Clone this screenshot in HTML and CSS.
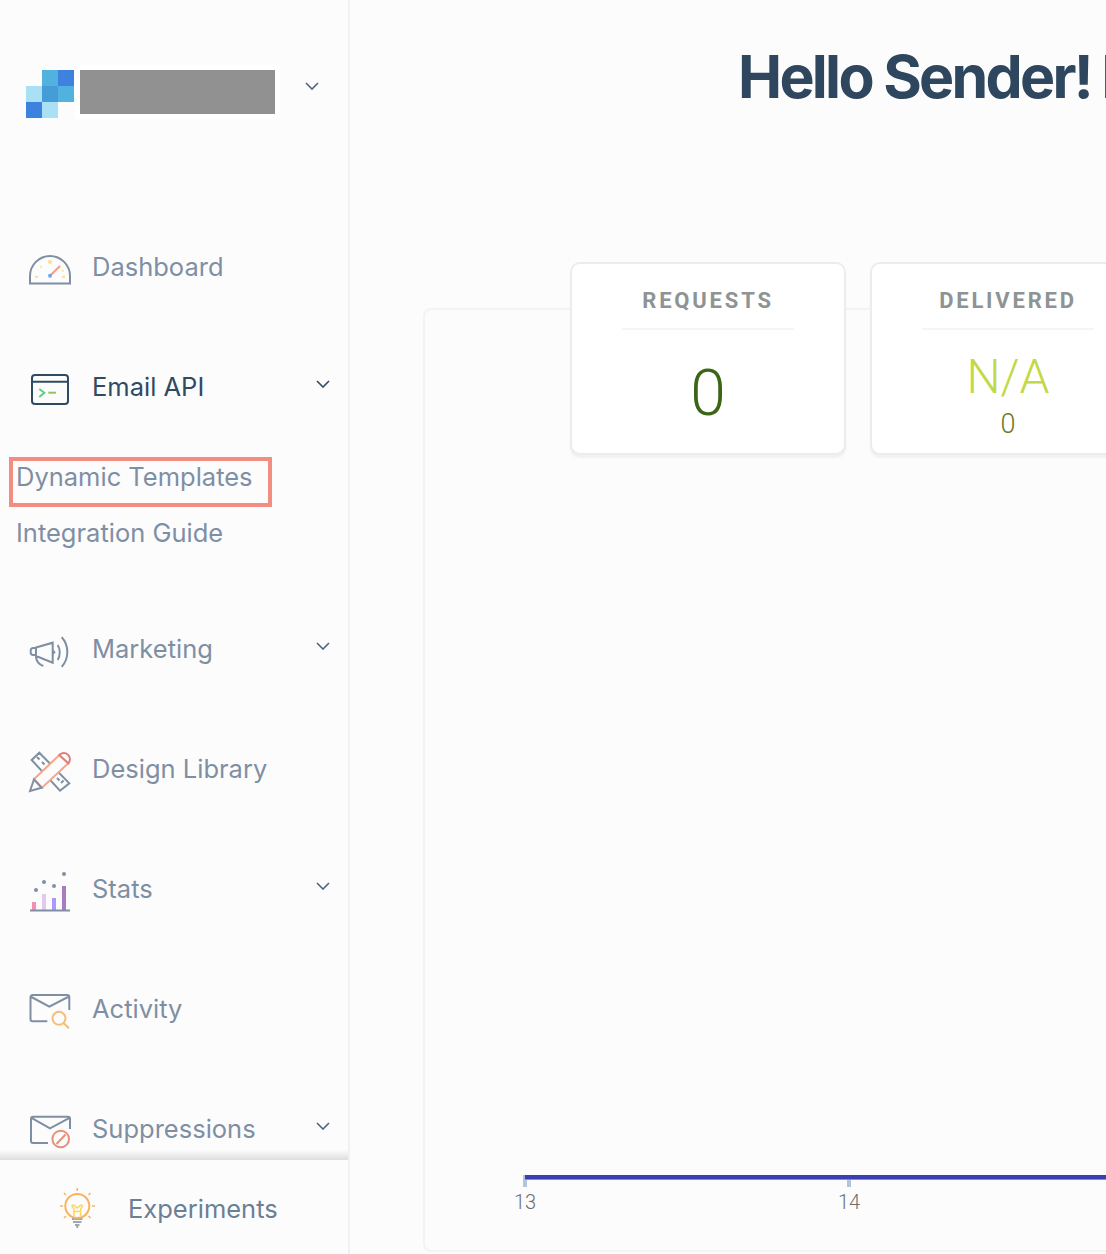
FILE: index.html
```html
<!DOCTYPE html>
<html lang="en">
<head>
<meta charset="utf-8">
<title>Dashboard</title>
<link rel="stylesheet" href="styles.css">
</head>
<body>
<div class="app">
  <aside class="sidebar">
    <div class="nav-scroll">
      <header class="account">
        <div class="logo">
          <span></span><span class="sky"></span><span class="blue"></span>
          <span class="pale"></span><span class="mid"></span><span class="sky"></span>
          <span class="blue"></span><span class="pale"></span><span></span>
        </div>
        <div class="redacted"><div class="redacted-fill"></div></div>
        <svg class="chevron account-chevron" viewBox="0 0 14 8"><path d="M1 1l6 6 6-6"/></svg>
      </header>
      <nav>
        <a class="nav-row">
          <svg class="nav-icon" viewBox="0 0 44 44">
            <path class="slate" d="M2 38.500V31a20 20 0 0 1 40 0v7.500z"/>
            <circle class="sun" cx="22" cy="17" r="2"/><circle class="sun" cx="13" cy="21.700" r="1"/><circle class="sun" cx="34.700" cy="25.700" r="1"/>
            <path class="sun-line" d="M7 31.700h3M34 31.700h3"/>
            <path class="needle" d="M22 30.700L32 21"/>
            <circle class="needle-dot" cx="22" cy="30.700" r="2"/>
          </svg>
          <span>Dashboard</span>
        </a>
        <a class="nav-row active">
          <svg class="nav-icon" viewBox="0 0 44 44">
            <rect class="navy" x="4" y="10" width="36" height="29" rx="3"/>
            <path class="navy" d="M4 16.700h36"/>
            <path class="prompt" d="M11.300 24l5 3.700-5 4.300"/>
            <path class="dash" d="M20.300 27.700H28"/>
          </svg>
          <span>Email API</span>
          <svg class="chevron nav-chevron" viewBox="0 0 14 8"><path d="M1 1l6 6 6-6"/></svg>
        </a>
        <div class="sub-list">
          <a class="sub-item highlighted">Dynamic Templates</a>
          <a class="sub-item">Integration Guide</a>
        </div>
        <a class="nav-row">
          <svg class="nav-icon" viewBox="0 0 44 44">
            <path class="slate" d="M8 20.500l16.700-4.800v20L8 29zM8 21H5a2.300 2.300 0 0 0-2.300 2.300v2.400A2.300 2.300 0 0 0 5 28h3M8 29.700c0 4 3 8 7.300 9.300M29.700 18c2.700 4 2.700 11 0 15M33.700 10.300c7.500 8 7.500 21.400 0 29.400"/>
            <path class="slate-fill" d="M24.700 22l3 3.300-3 3.300z"/>
          </svg>
          <span>Marketing</span>
          <svg class="chevron nav-chevron" viewBox="0 0 14 8"><path d="M1 1l6 6 6-6"/></svg>
        </a>
        <a class="nav-row">
          <svg class="nav-icon" viewBox="0 0 44 44">
            <path class="slate" d="M3.700 13l7.600-7.300L41.300 36.300 32 43.700zM9 10l2.500 2.500M14 15l2.500 2.500M29 31l2.500 2.500M33 36l2.500-2.500"/>
            <path class="pencil" d="M6 32.300L31.300 8l9 8.300-26.300 24.400z"/>
            <path class="pencil-cap" d="M31.300 8a5 5 0 1 1 9 8.300z"/>
            <path class="slate" d="M2 44l4-11.700 7.700 8.400z"/>
          </svg>
          <span>Design Library</span>
        </a>
        <a class="nav-row">
          <svg class="nav-icon" viewBox="0 0 44 44">
            <path class="bar-pink" d="M4 35h4v8H4z"/><path class="bar-lilac" d="M14 27h4v16h-4z"/>
            <path class="bar-violet" d="M24 31h4v12h-4z"/><path class="bar-purple" d="M34 19h4v24h-4z"/>
            <path class="slate" d="M2 43.500h40"/>
            <circle class="slate-fill" cx="8" cy="23" r="2"/><circle class="slate-fill" cx="16" cy="15" r="2"/>
            <circle class="slate-fill" cx="26" cy="19" r="2"/><circle class="slate-fill" cx="36" cy="7" r="2"/>
          </svg>
          <span>Stats</span>
          <svg class="chevron nav-chevron" viewBox="0 0 14 8"><path d="M1 1l6 6 6-6"/></svg>
        </a>
        <a class="nav-row">
          <svg class="nav-icon" viewBox="0 0 44 44">
            <path class="slate" d="M19.300 34.300H4.500a2 2 0 0 1-2-2V10a2 2 0 0 1 2-2h34.800a2 2 0 0 1 2 2v13M2.500 9.500l18.800 10.200L41 9.500"/>
            <circle class="lens" cx="31" cy="31.300" r="6.500"/>
            <path class="lens" d="M36 36.500l5 4.800"/>
          </svg>
          <span>Activity</span>
        </a>
        <a class="nav-row">
          <svg class="nav-icon" viewBox="0 0 44 44">
            <path class="slate" d="M20 36H5a2 2 0 0 1-2-2V11.700a2 2 0 0 1 2-2h35a2 2 0 0 1 2 2V22M3 10.700l19 10.600 20-10.600"/>
            <circle class="ban" cx="32.700" cy="32" r="8.300"/>
            <path class="ban" d="M28.500 37l9-9.500"/>
          </svg>
          <span>Suppressions</span>
          <svg class="chevron nav-chevron" viewBox="0 0 14 8"><path d="M1 1l6 6 6-6"/></svg>
        </a>
      </nav>
    </div>
    <footer class="experiments">
      <svg class="bulb" viewBox="0 0 44 44">
        <path class="bulb-base" d="M17 34h10.500M18 37h8.500M20 40h4.500M22.300 40v3"/>
        <circle class="bulb-glass" cx="22.300" cy="21" r="12"/>
        <path class="bulb-wire" d="M19 31v-7l-2-3a1.600 1.600 0 0 1 3 0l2.300 2 2.300-2a1.600 1.600 0 0 1 3 0l-2 3v7M19 26.500h6.500"/>
        <path class="bulb-ray" d="M22.300 3v3M5 21h3M37 21h3M9 8l2 2M35.500 8l-2 2M9 33l2-2M35.500 33l-2-2"/>
      </svg>
      <span>Experiments</span>
    </footer>
  </aside>
  <main class="main">
    <h1 class="greeting">Hello Sender! <span class="greeting-rest">Here</span></h1>
    <section class="stat-row">
      <article class="stat-card">
        <h2 class="stat-label">REQUESTS</h2>
        <div class="stat-value requests">0</div>
      </article>
      <article class="stat-card">
        <h2 class="stat-label">DELIVERED</h2>
        <div class="stat-value delivered">N/A</div>
        <div class="stat-count">0</div>
      </article>
    </section>
    <section class="chart">
      <div class="axis-line"></div>
      <div class="axis-ticks">
        <div class="tick"><i class="tick-mark first"></i><span>13</span></div>
        <div class="tick"><i class="tick-mark"></i><span>14</span></div>
        <div class="tick"><i class="tick-mark"></i><span>15</span></div>
      </div>
    </section>
  </main>
</div>
</body>
</html>
```
FILE: styles.css
```css
* { box-sizing: border-box; }
html, body { margin: 0; height: 100%; }
body { background: #fcfcfc; overflow: hidden; font-family: Inter, "Liberation Sans", sans-serif; }
.app { display: flex; width: 1106px; height: 1254px; overflow: hidden; }

/* sidebar */
.sidebar { flex: none; width: 350px; height: 1254px; display: flex; flex-direction: column; border-right: 2px solid #f1f1f5; background: #fcfcfd; }
.nav-scroll { flex: 1; min-height: 0; overflow: hidden; }
.account { display: flex; align-items: flex-start; height: 207px; padding: 65px 0 0 26px; }
.logo { display: grid; grid-template-columns: repeat(3, 16px); grid-auto-rows: 16px; margin-top: 5px; }
.logo .sky { background: #51b2e0; }
.logo .blue { background: #3d82de; }
.logo .pale { background: #a9e0f5; }
.logo .mid { background: #459cd6; }
.redacted { width: 205px; height: 54px; margin-left: 1px; padding: 5px; background: #fff; }
.redacted-fill { height: 44px; background: #919191; }
.chevron { width: 14px; height: 8px; fill: none; stroke: #4e647c; stroke-width: 1.6; }
.account-chevron { margin: 17px 0 0 25px; }

.nav-row { position: relative; display: flex; align-items: center; height: 120px; padding-left: 28px; color: #7f8fa3; font-size: 25.5px; }
.nav-row span { margin: 0 0 2px 20px; }
.nav-row.active { color: #2f4a63; }
.nav-icon { flex: none; width: 44px; height: 44px; overflow: visible; }
.nav-chevron { position: absolute; left: 316px; top: 53px; }
.active .nav-chevron { stroke: #2f4a63; }

.sub-list { height: 142px; padding-top: 10px; }
.sub-item { display: block; height: 56px; padding-left: 16px; color: #7f8fa3; font-size: 25.5px; line-height: 40px; }
.sub-item.highlighted { width: 263px; height: 50px; margin-left: 9px; margin-bottom: 6px; padding-left: 3px; border: 4px solid #f28d82; line-height: 32px; }

.experiments { position: relative; flex: none; height: 94px; display: flex; align-items: center; padding-left: 55px; color: #6b7f95; font-size: 25.5px; background: #fcfcfd; }
.experiments::before { content: ""; position: absolute; left: 0; right: 0; top: -10px; height: 10px; background: linear-gradient(rgba(0, 0, 0, 0), rgba(0, 0, 0, .12)); }
.experiments span { margin: 2px 0 0 29px; }
.bulb { width: 44px; height: 44px; flex: none; }

/* icon strokes */
svg path, svg circle, svg rect { fill: none; }
.slate { stroke: #7f8fa3; stroke-width: 2; }
.slate-fill { fill: #7f8fa3 !important; }
.navy { stroke: #2f4a63; stroke-width: 2; }
.sun { fill: #fbe08a !important; }
.sun-line { stroke: #fbe08a; stroke-width: 2; }
.needle { stroke: #f59c84; stroke-width: 2; }
.needle-dot { fill: #6fa5ee !important; }
.prompt { stroke: #5fcf80; stroke-width: 2; }
.dash { stroke: #8fc65a; stroke-width: 2; }
.pencil { fill: #fcfcfd !important; stroke: #f4a58c; stroke-width: 2; }
.pencil-cap { fill: #fcfcfd !important; stroke: #d9827a; stroke-width: 2; }
.bar-pink { fill: #f48fb1 !important; }
.bar-lilac { fill: #e6c8ef !important; }
.bar-violet { fill: #a899fa !important; }
.bar-purple { fill: #a77cc0 !important; }
.lens { stroke: #f6bc78; stroke-width: 2; }
.ban { stroke: #e8907a; stroke-width: 2; }
.bulb-base { stroke: #9aa8b8; stroke-width: 2; }
.bulb-glass { stroke: #f9b25e; stroke-width: 2; }
.bulb-wire { stroke: #fbd75b; stroke-width: 1.500; }
.bulb-ray { stroke: #f9b25e; stroke-width: 1.500; }

/* main */
.main { flex: none; width: 756px; padding-left: 73px; overflow: hidden; }
.greeting { width: 900px; height: 262px; margin: 0; padding: 42px 0 0 315px; color: #2e465e; font-size: 59px; line-height: 70px; font-weight: 700; letter-spacing: -2.7px; white-space: nowrap; }
.greeting-rest { margin-left: -1px; }
.stat-row { position: relative; z-index: 1; display: flex; gap: 24px; height: 192px; margin: 0 0 -146px 147px; width: 800px; }
.stat-card { flex: none; width: 276px; height: 193px; padding: 0 50px; text-align: center; background: #fff; border: 2px solid #ececec; border-radius: 10px; box-shadow: 0 3px 2px #f1f1f1; font-family: Roboto, sans-serif; }
.stat-label { height: 66px; margin: 0; border-bottom: 2px solid #f5f5f5; color: #8e9393; font-size: 22px; line-height: 74px; font-weight: 700; letter-spacing: 2.8px; }
.stat-value { font-weight: 300; }
.requests { color: #3c6517; font-size: 64px; line-height: 128px; }
.delivered { color: #c3d845; font-size: 48px; line-height: 94px; }
.stat-count { margin-top: -15px; color: #6f7a1f; font-size: 27px; line-height: 30px; font-weight: 300; }

.chart { display: flex; flex-direction: column; justify-content: flex-end; width: 1000px; height: 944px; padding-bottom: 34px; border: 2px solid #f3f3f3; border-radius: 8px; }
.axis-line { position: relative; z-index: 1; height: 5px; margin-left: 100px; background: #3a3fb5; border-bottom: 1px solid #8a8cb8; }
.axis-ticks { display: flex; margin: -5px 0 0 -62px; }
.tick { flex: none; width: 324px; display: flex; flex-direction: column; align-items: center; color: #6e6e6e; font-family: Roboto, sans-serif; font-size: 20px; line-height: 28px; font-weight: 300; }
.tick-mark { display: block; width: 4px; height: 12px; margin-bottom: 1px; background: #b3c4dc; }
```
